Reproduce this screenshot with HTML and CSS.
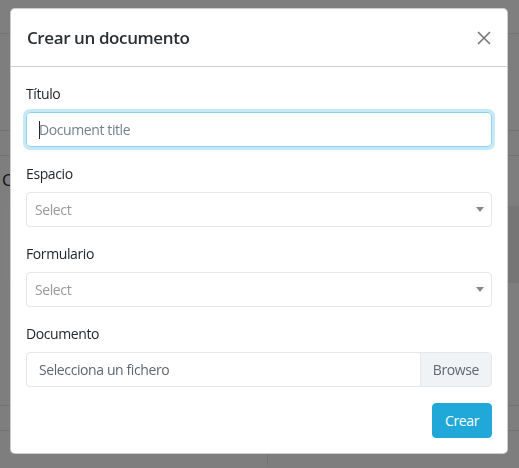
FILE: index.html
```html
<!DOCTYPE html>
<html lang="es">
<head>
<meta charset="utf-8">
<title>Crear un documento</title>
<link rel="stylesheet" href="styles.css">
</head>
<body>
<div class="page">
  <div class="topbar"></div>
  <div class="crumbs"></div>
  <div class="subnav"></div>
  <div class="page-title">C</div>
  <div class="page-card">
    <div class="page-card-side"></div>
    <div class="page-card-main"></div>
  </div>
  <div class="page-rest"></div>
  <div class="page-row"></div>
  <div class="page-foot">
    <div class="page-foot-left"></div>
    <div class="page-foot-right"></div>
  </div>
</div>

<div class="backdrop">
  <div class="modal">
    <div class="modal-header">
      <h5 class="modal-title">Crear un documento</h5>
      <button class="close" type="button" aria-label="Cerrar">
        <svg width="14" height="14" viewBox="0 0 14 14"><path d="M1 1 L13 13 M13 1 L1 13" stroke="#7b7b7b" stroke-width="1.7" fill="none"/></svg>
      </button>
    </div>
    <div class="modal-body">
      <div class="form-group">
        <label class="label">Título</label>
        <div class="input focused">
          <span class="caret"></span>
          <span class="placeholder">Document title</span>
        </div>
      </div>
      <div class="form-group">
        <label class="label">Espacio</label>
        <div class="select">
          <span class="select-text">Select</span>
          <span class="arrow"></span>
        </div>
      </div>
      <div class="form-group">
        <label class="label">Formulario</label>
        <div class="select">
          <span class="select-text">Select</span>
          <span class="arrow"></span>
        </div>
      </div>
      <div class="form-group">
        <label class="label">Documento</label>
        <div class="file">
          <span class="file-text">Selecciona un fichero</span>
          <span class="browse">Browse</span>
        </div>
      </div>
      <div class="actions">
        <button class="btn" type="button">Crear</button>
      </div>
    </div>
  </div>
</div>
</body>
</html>
```
FILE: styles.css
```css
* { box-sizing: border-box; }
html, body { margin: 0; padding: 0; }
body {
  width: 519px;
  height: 468px;
  overflow: hidden;
  font-family: "Open Sans", "Noto Sans", "DejaVu Sans", sans-serif;
  color: #23282c;
  background: #ffffff;
  letter-spacing: -0.4px;
}

/* underlying page */
.page { width: 519px; height: 468px; background: #fdfdfd; }
.topbar { height: 34px; border-bottom: 1px solid #e8e8e8; background: #ffffff; }
.crumbs { height: 97px; border-bottom: 1px solid #e4e4e4; }
.subnav { height: 25px; border-bottom: 1px solid #e4e4e4; }
.page-title {
  height: 50px;
  padding: 12px 0 0 2px;
  font-size: 17px;
  color: #23282c;
}
.page-card { display: flex; height: 77px; }
.page-card-side { width: 268px; background: #ffffff; margin-left: 3px; border-radius: 4px 0 0 4px; }
.page-card-main { flex: 1; background: #ececec; }
.page-rest { height: 123px; border-bottom: 1px solid #e6e6e6; }
.page-row { height: 25px; border-bottom: 1px solid #e6e6e6; }
.page-foot { display: flex; height: 36px; }
.page-foot-left { width: 268px; border-right: 1px solid #e6e6e6; }
.page-foot-right { flex: 1; }

/* overlay */
.backdrop {
  position: fixed;
  inset: 0;
  background: rgba(0, 0, 0, 0.5);
  padding: 8px 0 0 10px;
}
.modal {
  width: 498px;
  background: #ffffff;
  border: 1px solid rgba(0, 0, 0, 0.2);
  border-radius: 5px;
}
.modal-header {
  display: flex;
  align-items: center;
  justify-content: space-between;
  height: 58px;
  padding: 0 15px 0 16px;
  border-bottom: 1px solid #c8ced3;
}
.modal-title {
  margin: 0;
  font-size: 17px;
  font-weight: 600;
  letter-spacing: -0.4px;
  line-height: 24px;
  color: #2a2f33;
}
.close {
  border: 0;
  background: transparent;
  padding: 0;
  width: 14px;
  height: 14px;
  margin-right: 1px;
  display: flex;
}
.modal-body { padding: 16px 15px 15px 15px; }
.form-group { margin-bottom: 16px; }
.label {
  display: block;
  font-size: 14px;
  line-height: 21px;
  margin-bottom: 8px;
  color: #23282c;
}
.input {
  position: relative;
  height: 35px;
  border: 1px solid #e4e7ea;
  border-radius: 4px;
  padding: 0 12px;
  display: flex;
  align-items: center;
  font-size: 14px;
}
.input.focused {
  border-color: #8ad4ee;
  box-shadow: 0 0 0 3px rgba(32, 168, 216, 0.25);
}
.caret {
  position: absolute;
  left: 12px;
  top: 8px;
  width: 1px;
  height: 18px;
  background: #23282c;
}
.placeholder { color: #73818f; }
.select {
  height: 35px;
  border: 1px solid #e4e7ea;
  border-radius: 4px;
  padding: 0 7px 0 8px;
  display: flex;
  align-items: center;
  justify-content: space-between;
  font-size: 14px;
}
.select-text { color: #999999; }
.arrow {
  width: 0;
  height: 0;
  border-style: solid;
  border-width: 5px 4px 0 4px;
  border-color: #888888 transparent transparent transparent;
}
.file {
  height: 35px;
  border: 1px solid #e4e7ea;
  border-radius: 4px;
  display: flex;
  align-items: stretch;
  font-size: 14px;
  color: #5c6873;
  overflow: hidden;
}
.file-text { flex: 1; padding: 0 12px; display: flex; align-items: center; }
.browse {
  display: flex;
  align-items: center;
  padding: 0 12px;
  background: #f0f3f5;
  border-left: 1px solid #e4e7ea;
}
.actions { display: flex; justify-content: flex-end; }
.btn {
  height: 35px;
  padding: 0 12px;
  border: 1px solid #20a8d8;
  border-radius: 4px;
  background: #20a8d8;
  color: #ffffff;
  font-family: inherit;
  font-size: 14px;
  letter-spacing: -0.4px;
}
```
